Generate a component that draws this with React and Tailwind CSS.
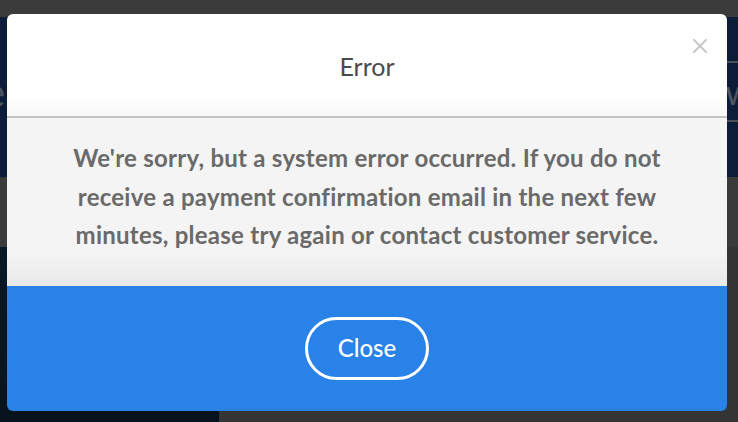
export default function App() {
  return (
    <div className="relative w-[738px] h-[422px] overflow-hidden bg-[#353535] font-['Lato',sans-serif]">
      {/* dimmed page behind */}
      <div className="flex flex-col h-full">
        <div className="h-[17px] bg-[#3b3b3b]" />
        <div className="h-[160px] bg-[#0c1d3a] flex flex-col">
          <div className="h-[44px]" />
          <div className="h-[2px] ml-[600px] bg-[#4a4f58]" />
          <div className="flex-1 flex items-center justify-between overflow-hidden">
            <span className="-ml-[16px] text-[40px] leading-none text-[#4d5563]">e</span>
            <span className="-mr-[14px] text-[34px] leading-none text-[#4d5563]">w</span>
          </div>
          <div className="h-[2px] ml-[600px] bg-[#4a4f58]" />
          <div className="h-[55px]" />
        </div>
        <div className="h-[70px] bg-[#3a3a3a]" />
        <div className="flex-1 flex">
          <div className="w-[219px] bg-gradient-to-b from-[#0a1826] to-[#07121c]" />
          <div className="flex-1 bg-[#353535]" />
        </div>
      </div>

      {/* modal */}
      <div className="absolute left-[7px] top-[14px] w-[720px] h-[397px] rounded-[6px] overflow-hidden flex flex-col">
        <div className="relative h-[102px] bg-gradient-to-b from-white from-80% to-[#f7f7f7] flex items-center justify-center">
          <h2 className="text-[25px] leading-none text-[#4a4a4a] font-normal pt-[2px]">Error</h2>
          <button className="absolute right-[19px] top-[24px] w-[16px] h-[16px] flex items-center justify-center">
            <svg width="16" height="16" viewBox="0 0 16 16" fill="none" stroke="#c9c9c9" strokeWidth="2.2" strokeLinecap="round">
              <path d="M2 2 L14 14 M14 2 L2 14" />
            </svg>
          </button>
        </div>
        <div className="h-[2px] bg-[#c3c3c3]" />
        <div className="h-[168px] bg-gradient-to-b from-[#f4f4f4] from-80% to-[#e9e9e9] px-10 pt-[21px] text-center">
          <p className="text-[24px] leading-[38.5px] font-bold tracking-[0.25px] text-[#6a6a6a]">
            We're sorry, but a system error occurred. If you do not
            <br />
            receive a payment confirmation email in the next few
            <br />
            minutes, please try again or contact customer service.
          </p>
        </div>
        <div className="flex-1 bg-[#2982e8] flex items-center justify-center">
          <button className="w-[124px] h-[63px] rounded-full border-[3px] border-white text-white text-[24px] font-medium leading-none pb-[2px]">
            Close
          </button>
        </div>
      </div>
    </div>
  );
}
